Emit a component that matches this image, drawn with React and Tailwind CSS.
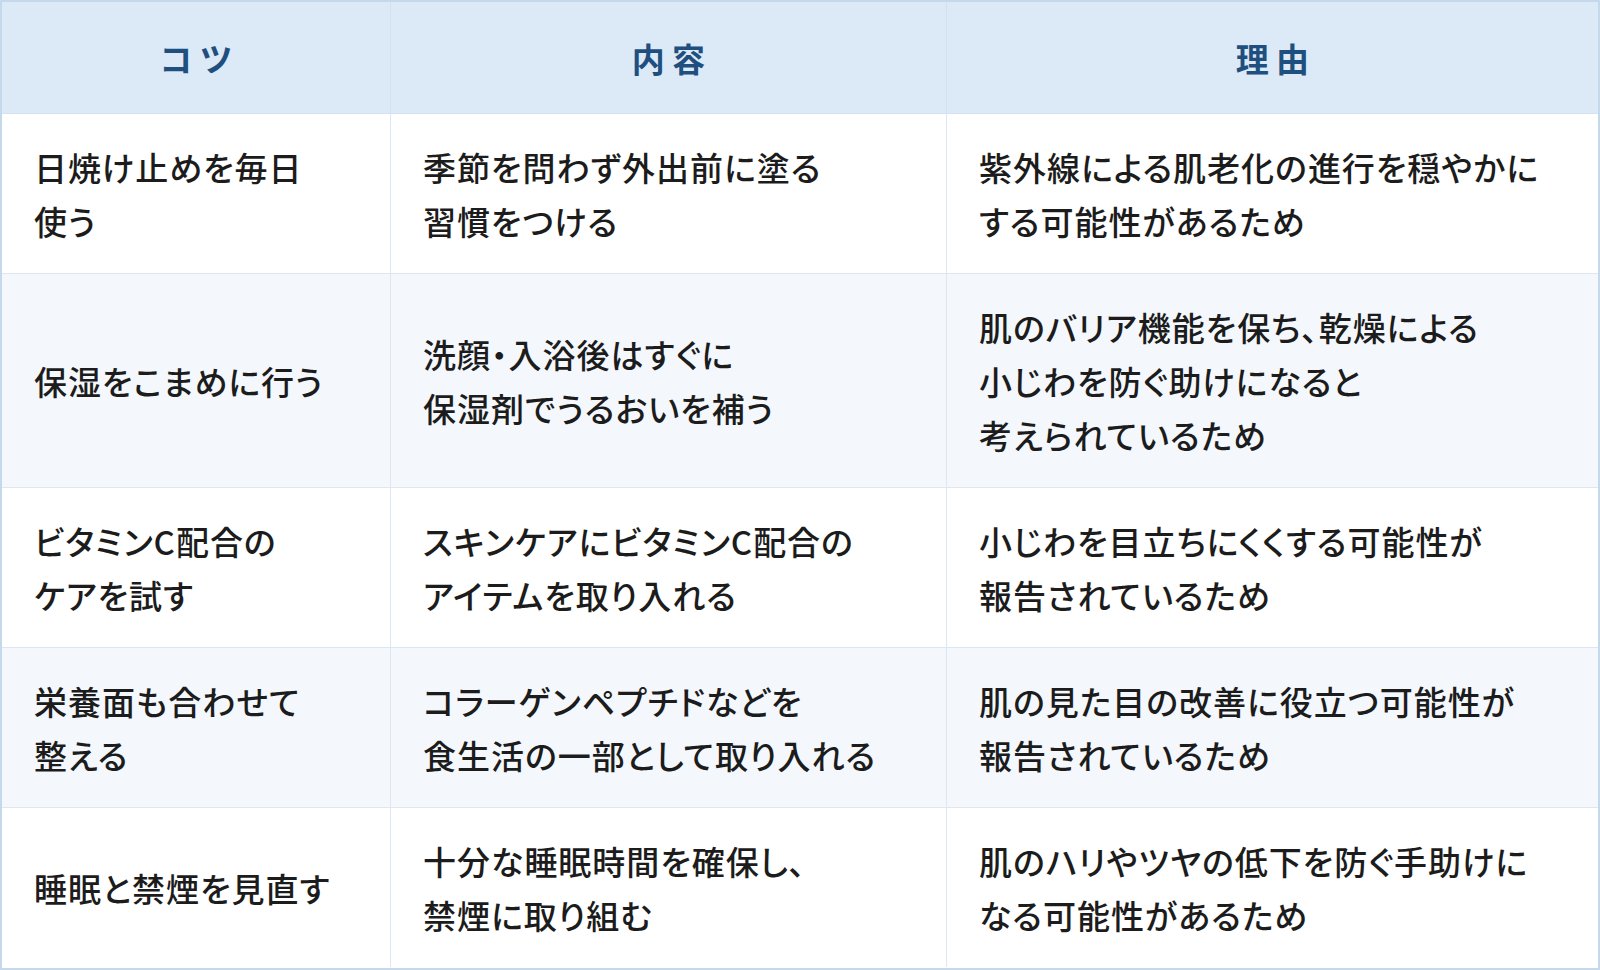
const rows = [
  {
    tip: ['日焼け止めを毎日', '使う'],
    detail: ['季節を問わず外出前に塗る', '習慣をつける'],
    reason: ['紫外線による肌老化の進行を穏やかに', 'する可能性があるため'],
  },
  {
    tip: ['保湿をこまめに行う'],
    detail: ['洗顔・入浴後はすぐに', '保湿剤でうるおいを補う'],
    reason: ['肌のバリア機能を保ち、乾燥による', '小じわを防ぐ助けになると', '考えられているため'],
  },
  {
    tip: ['ビタミンC配合の', 'ケアを試す'],
    detail: ['スキンケアにビタミンC配合の', 'アイテムを取り入れる'],
    reason: ['小じわを目立ちにくくする可能性が', '報告されているため'],
  },
  {
    tip: ['栄養面も合わせて', '整える'],
    detail: ['コラーゲンペプチドなどを', '食生活の一部として取り入れる'],
    reason: ['肌の見た目の改善に役立つ可能性が', '報告されているため'],
  },
  {
    tip: ['睡眠と禁煙を見直す'],
    detail: ['十分な睡眠時間を確保し、', '禁煙に取り組む'],
    reason: ['肌のハリやツヤの低下を防ぐ手助けに', 'なる可能性があるため'],
  },
];

function Lines({ lines }) {
  return (
    <div className="flex flex-col">
      {lines.map((l, i) => (
        <span key={i} className="whitespace-nowrap">{l}</span>
      ))}
    </div>
  );
}

export default function App() {
  return (
    <div
      className="w-[1600px] h-[970px] bg-white border-2 border-[#c6d9ec] overflow-hidden text-[33px] leading-[54px] font-medium text-[#1c1c1c]"
      style={{ fontFamily: '"Noto Sans CJK JP", "Noto Sans", sans-serif' }}
    >
      <div className="grid grid-cols-[389px_556px_1fr]">
        {/* header */}
        {['コツ', '内容', '理由'].map((h, i) => (
          <div
            key={h}
            className={
              'flex items-center justify-center h-[112px] bg-[#dce9f7] border-b border-[#d3e1f0] font-bold text-[#1f4f7f] ' +
              (i < 2 ? 'border-r border-r-[#d3e1f0]' : '')
            }
          >
            <span className="tracking-[0.22em] mr-[-0.22em]">{h}</span>
          </div>
        ))}

        {/* body rows - proportional kana like the reference */}
        {rows.map((r, ri) => {
          const bg = ri % 2 === 1 ? 'bg-[#f4f8fd]' : 'bg-white';
          const last = ri === rows.length - 1;
          const base = `flex items-center px-8 py-[25.5px] tracking-[0.03em] [font-feature-settings:'palt'] ${bg} ${last ? '' : 'border-b border-[#dde7f2]'}`;
          return [
            <div key={ri + 'a'} className={`${base} border-r border-r-[#dde7f2]`}>
              <Lines lines={r.tip} />
            </div>,
            <div key={ri + 'b'} className={`${base} border-r border-r-[#dde7f2]`}>
              <Lines lines={r.detail} />
            </div>,
            <div key={ri + 'c'} className={base}>
              <Lines lines={r.reason} />
            </div>,
          ];
        })}
      </div>
    </div>
  );
}
